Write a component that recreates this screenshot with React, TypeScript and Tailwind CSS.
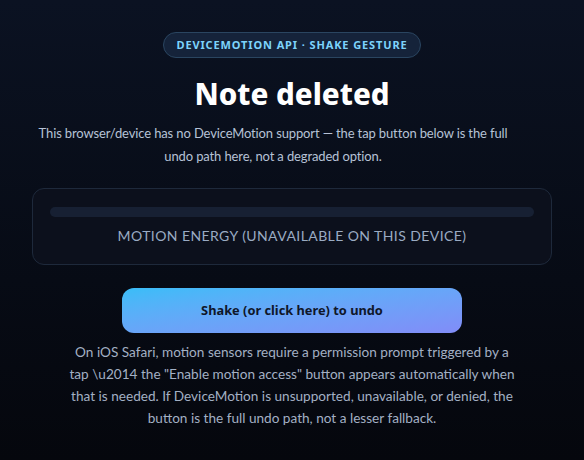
export default function App() {
  return (
    <div
      className="min-h-[460px] w-full bg-gradient-to-b from-[#0b1222] to-[#05070d] text-slate-200"
      style={{ fontFamily: 'Lato, "Noto Sans", sans-serif' }}
    >
      <main className="mx-auto flex w-[520px] flex-col items-center pt-[32px] pb-6">
        {/* Badge */}
        <span className="inline-flex h-[26px] items-center rounded-full border border-[#2a4560] bg-[#15233a] px-3 font-['Noto_Sans',sans-serif] text-[11px] font-bold uppercase tracking-[0.08em] text-[#7dd3fc]">
          DeviceMotion API · Shake Gesture
        </span>

        <h1 className="mt-[19px] font-['Noto_Sans',sans-serif] text-[29.5px] font-extrabold leading-[34px] text-white">
          Note deleted
        </h1>

        <p className="mt-[11px] max-w-[482px] self-start text-center text-[13px] leading-[23px] tracking-[-0.01em] text-[#b6c2d6]">
          This browser/device has no DeviceMotion support — the tap button below is the full undo path here, not a
          degraded option.
        </p>

        {/* Motion meter */}
        <div className="mt-[20px] w-full rounded-xl border border-[#1e293b] bg-[#0c101c] px-[17px] pt-[18px] pb-[18px]">
          <div className="h-[10px] w-full rounded-full bg-[#172033]" />
          <p className="mt-[9px] text-center text-[14px] leading-[20px] tracking-[0.03em] text-[#9aabc3]">
            MOTION ENERGY (UNAVAILABLE ON THIS DEVICE)
          </p>
        </div>

        <button
          type="button"
          className="mt-[23px] h-[45px] w-[340px] rounded-xl bg-gradient-to-br from-[#38bdf8] to-[#818cf8] font-['Noto_Sans',sans-serif] text-[12.8px] font-bold text-[#0f172a]"
        >
          Shake (or click here) to undo
        </button>

        <p className="mt-[8px] max-w-[454px] text-center text-[13.6px] leading-[22px] text-[#a3b0c4]">
          On iOS Safari, motion sensors require a permission prompt triggered by a tap \u2014 the "Enable motion
          access" button appears automatically when that is needed. If DeviceMotion is unsupported, unavailable, or
          denied, the button is the full undo path, not a lesser fallback.
        </p>
      </main>
    </div>
  );
}
